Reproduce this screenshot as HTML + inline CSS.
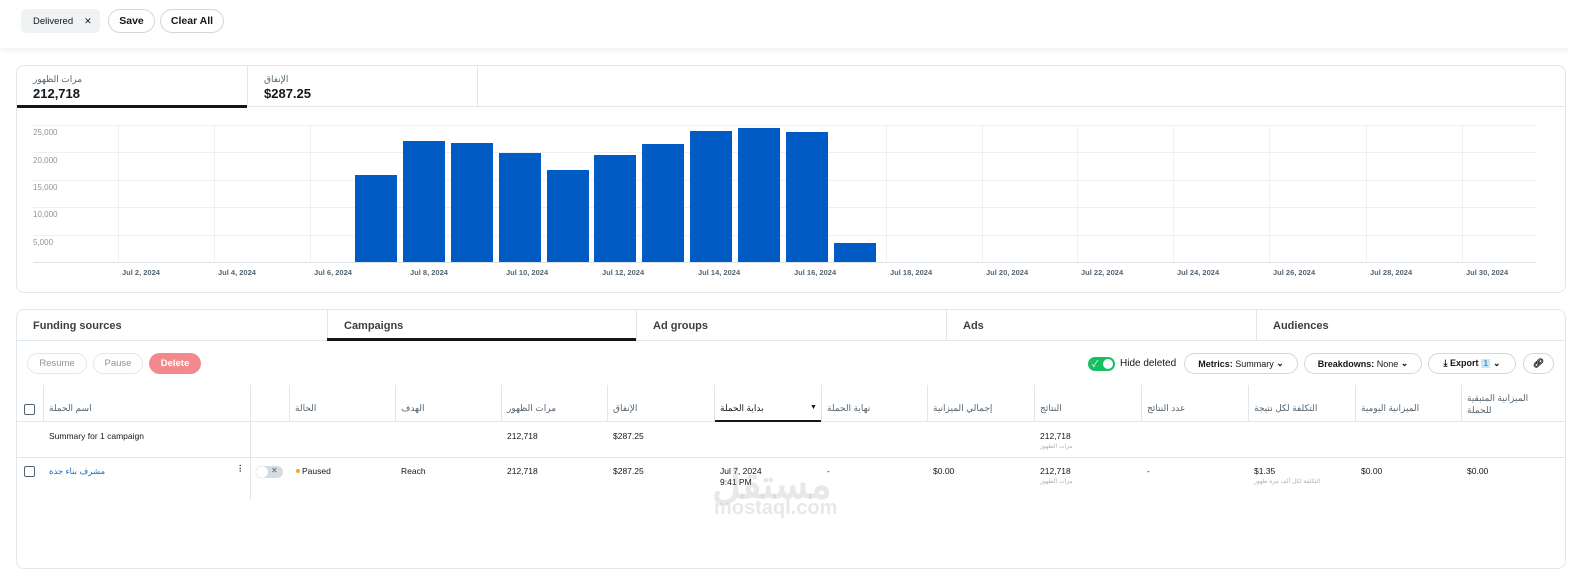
<!DOCTYPE html>
<html><head><meta charset="utf-8"><style>
*{box-sizing:border-box;margin:0;padding:0}
body{width:1569px;height:532px;overflow:hidden;background:#fff;font-family:"Liberation Sans","Noto Sans CJK SC",sans-serif;color:#14171a;position:relative}
.a{position:absolute}
.top{left:0;top:0;width:1569px;height:48px;background:#fff;box-shadow:0 2px 6px rgba(0,0,0,.07)}
.pill{position:absolute;border:1px solid #cfd9de;border-radius:14px;font-size:10.5px;font-weight:bold;display:flex;align-items:center;justify-content:center;background:#fff}
.card{position:absolute;border:1px solid #e1e8ed;border-radius:8px;background:#fff}
.gl{position:absolute;background:#eef1f3}
.yl{position:absolute;left:33px;font-size:8px;color:#8a96a0}
.xl{position:absolute;top:268px;font-size:7.5px;color:#536471;font-weight:bold}
.bar{position:absolute;background:#005bc4;width:42px}
.tab{position:absolute;top:310px;height:30px;font-family:"Liberation Sans Narrow","Liberation Sans",sans-serif;font-weight:bold;font-size:11px;color:#3a3f44;padding:10px 0 0 16px;border-left:1px solid #e1e8ed}
.h{position:absolute;font-size:9px;color:#536471}
.c{position:absolute;font-size:8.5px;color:#14171a}
.s{position:absolute;font-size:6px;color:#aab4bc}
.vl{position:absolute;width:1px;background:#e1e8ed}
.hl{position:absolute;height:1px;background:#e1e8ed;left:17px;width:1549px}
.cb{position:absolute;width:11px;height:11px;border:1.3px solid #536471;border-radius:2px}
</style></head><body>
<div class="a top"></div>
<div class="pill" style="left:21px;top:9px;width:79px;height:24px;background:#eff3f4;border:none;border-radius:5px;font-weight:normal;font-size:9.5px;justify-content:flex-start;padding-left:12px">Delivered<span style="margin-left:11px;font-size:9px">✕</span></div>
<div class="pill" style="left:108px;top:9px;width:47px;height:24px">Save</div>
<div class="pill" style="left:160px;top:9px;width:64px;height:24px">Clear All</div>

<div class="card" style="left:16px;top:65px;width:1550px;height:228px"></div>
<div class="a" style="left:17px;top:106px;width:1548px;height:1px;background:#e1e8ed"></div>
<div class="a" style="left:247px;top:66px;width:1px;height:41px;background:#e1e8ed"></div>
<div class="a" style="left:477px;top:66px;width:1px;height:41px;background:#e1e8ed"></div>
<div class="a" style="left:17px;top:105px;width:230px;height:3px;background:#14171a"></div>
<div class="a" style="left:33px;top:74px;font-size:9px;color:#536471">مرات الظهور</div>
<div class="a" style="left:33px;top:86px;font-size:13px;font-weight:bold">212,718</div>
<div class="a" style="left:264px;top:74px;font-size:9px;color:#536471">الإنفاق</div>
<div class="a" style="left:264px;top:86px;font-size:13px;font-weight:bold">$287.25</div>

<div class="gl" style="left:33px;top:125px;width:1503px;height:1px"></div>
<div class="gl" style="left:33px;top:152px;width:1503px;height:1px"></div>
<div class="gl" style="left:33px;top:180px;width:1503px;height:1px"></div>
<div class="gl" style="left:33px;top:207px;width:1503px;height:1px"></div>
<div class="gl" style="left:33px;top:235px;width:1503px;height:1px"></div>
<div class="gl" style="left:33px;top:262px;width:1503px;height:1px;background:#dde3e8"></div>
<div class="yl" style="top:128px">25,000</div>
<div class="yl" style="top:156px">20,000</div>
<div class="yl" style="top:183px">15,000</div>
<div class="yl" style="top:210px">10,000</div>
<div class="yl" style="top:238px">5,000</div>
<div class="gl" style="left:118px;top:125px;width:1px;height:137px"></div>
<div class="gl" style="left:214px;top:125px;width:1px;height:137px"></div>
<div class="gl" style="left:310px;top:125px;width:1px;height:137px"></div>
<div class="gl" style="left:886px;top:125px;width:1px;height:137px"></div>
<div class="gl" style="left:982px;top:125px;width:1px;height:137px"></div>
<div class="gl" style="left:1077px;top:125px;width:1px;height:137px"></div>
<div class="gl" style="left:1173px;top:125px;width:1px;height:137px"></div>
<div class="gl" style="left:1269px;top:125px;width:1px;height:137px"></div>
<div class="gl" style="left:1366px;top:125px;width:1px;height:137px"></div>
<div class="gl" style="left:1462px;top:125px;width:1px;height:137px"></div>
<div class="bar" style="left:355px;top:175px;height:87px"></div>
<div class="bar" style="left:403px;top:141px;height:121px"></div>
<div class="bar" style="left:451px;top:143px;height:119px"></div>
<div class="bar" style="left:499px;top:153px;height:109px"></div>
<div class="bar" style="left:547px;top:170px;height:92px"></div>
<div class="bar" style="left:594px;top:155px;height:107px"></div>
<div class="bar" style="left:642px;top:144px;height:118px"></div>
<div class="bar" style="left:690px;top:131px;height:131px"></div>
<div class="bar" style="left:738px;top:128px;height:134px"></div>
<div class="bar" style="left:786px;top:132px;height:130px"></div>
<div class="bar" style="left:834px;top:243px;height:19px"></div>
<div class="xl" style="left:122px">Jul 2, 2024</div>
<div class="xl" style="left:218px">Jul 4, 2024</div>
<div class="xl" style="left:314px">Jul 6, 2024</div>
<div class="xl" style="left:410px">Jul 8, 2024</div>
<div class="xl" style="left:506px">Jul 10, 2024</div>
<div class="xl" style="left:602px">Jul 12, 2024</div>
<div class="xl" style="left:698px">Jul 14, 2024</div>
<div class="xl" style="left:794px">Jul 16, 2024</div>
<div class="xl" style="left:890px">Jul 18, 2024</div>
<div class="xl" style="left:986px">Jul 20, 2024</div>
<div class="xl" style="left:1081px">Jul 22, 2024</div>
<div class="xl" style="left:1177px">Jul 24, 2024</div>
<div class="xl" style="left:1273px">Jul 26, 2024</div>
<div class="xl" style="left:1370px">Jul 28, 2024</div>
<div class="xl" style="left:1466px">Jul 30, 2024</div>

<div class="card" style="left:16px;top:309px;width:1550px;height:260px"></div>
<div class="tab" style="left:17px;width:310px;border-left:none">Funding sources</div>
<div class="tab" style="left:327px;width:309px">Campaigns</div>
<div class="tab" style="left:636px;width:310px">Ad groups</div>
<div class="tab" style="left:946px;width:310px">Ads</div>
<div class="tab" style="left:1256px;width:309px">Audiences</div>
<div class="a" style="left:17px;top:340px;width:1548px;height:1px;background:#e1e8ed"></div>
<div class="a" style="left:327px;top:338px;width:309px;height:3px;background:#14171a"></div>

<div class="pill" style="left:27px;top:353px;width:60px;height:21px;font-weight:normal;color:#8a96a0;font-size:9.5px;border-color:#e1e8ed">Resume</div>
<div class="pill" style="left:93px;top:353px;width:50px;height:21px;font-weight:normal;color:#8a96a0;font-size:9.5px;border-color:#e1e8ed">Pause</div>
<div class="pill" style="left:149px;top:353px;width:52px;height:21px;background:#f4898d;border:none;color:#fff;font-size:9.5px">Delete</div>

<div class="a" style="left:1088px;top:357px;width:27px;height:14px;background:#17bf63;border-radius:7px"><span style="position:absolute;left:4px;top:0;color:#fff;font-size:9px">✓</span><div style="position:absolute;right:2px;top:2px;width:10px;height:10px;border-radius:50%;background:#fff"></div></div>
<div class="a" style="left:1120px;top:358px;font-size:10px">Hide deleted</div>
<div class="pill" style="left:1184px;top:353px;width:114px;height:21px;font-size:9px">Metrics:<span style="font-weight:normal">&nbsp;Summary</span>&nbsp;⌄</div>
<div class="pill" style="left:1304px;top:353px;width:118px;height:21px;font-size:9px">Breakdowns:<span style="font-weight:normal">&nbsp;None</span>&nbsp;⌄</div>
<div class="pill" style="left:1428px;top:353px;width:88px;height:21px;font-size:9px">⤓ Export <span style="background:#cde6f7;color:#1d9bf0;padding:0 2px;margin:0 3px;font-size:8px">1</span>⌄</div>
<div class="pill" style="left:1523px;top:353px;width:31px;height:21px;font-size:9px">🔗︎</div>

<div class="hl" style="top:421px"></div>
<div class="hl" style="top:457px"></div>
<div class="vl" style="left:43px;top:385px;height:36px"></div>
<div class="vl" style="left:250px;top:385px;height:115px"></div>
<div class="vl" style="left:289px;top:385px;height:36px"></div>
<div class="vl" style="left:395px;top:385px;height:36px"></div>
<div class="vl" style="left:501px;top:385px;height:36px"></div>
<div class="vl" style="left:607px;top:385px;height:36px"></div>
<div class="vl" style="left:714px;top:385px;height:36px"></div>
<div class="vl" style="left:821px;top:385px;height:36px"></div>
<div class="vl" style="left:927px;top:385px;height:36px"></div>
<div class="vl" style="left:1034px;top:385px;height:36px"></div>
<div class="vl" style="left:1141px;top:385px;height:36px"></div>
<div class="vl" style="left:1248px;top:385px;height:36px"></div>
<div class="vl" style="left:1355px;top:385px;height:36px"></div>
<div class="vl" style="left:1461px;top:385px;height:36px"></div>
<div class="a" style="left:715px;top:420px;width:106px;height:2px;background:#14171a"></div>

<div class="cb" style="left:24px;top:404px"></div>
<div class="h" style="left:49px;top:403px">اسم الحملة</div>
<div class="h" style="left:295px;top:403px">الحالة</div>
<div class="h" style="left:401px;top:403px">الهدف</div>
<div class="h" style="left:507px;top:403px">مرات الظهور</div>
<div class="h" style="left:613px;top:403px">الإنفاق</div>
<div class="h" style="left:720px;top:403px;color:#14171a">بداية الحملة</div>
<div class="a" style="left:810px;top:404px;font-size:7px">▼</div>
<div class="h" style="left:827px;top:403px">نهاية الحملة</div>
<div class="h" style="left:933px;top:403px">إجمالي الميزانية</div>
<div class="h" style="left:1040px;top:403px">النتائج</div>
<div class="h" style="left:1147px;top:403px">عدد النتائج</div>
<div class="h" style="left:1254px;top:403px">التكلفة لكل نتيجة</div>
<div class="h" style="left:1361px;top:403px">الميزانية اليومية</div>
<div class="h" style="left:1467px;top:392px;line-height:12px">الميزانية المتبقية<br>للحملة</div>

<div class="c" style="left:49px;top:431px">Summary for 1 campaign</div>
<div class="c" style="left:507px;top:431px">212,718</div>
<div class="c" style="left:613px;top:431px">$287.25</div>
<div class="c" style="left:1040px;top:431px">212,718</div>
<div class="s" style="left:1040px;top:443px">مرات الظهور</div>

<div class="cb" style="left:24px;top:466px"></div>
<div class="c" style="left:49px;top:466px;color:#1d6fc2">مشرف بناء جدة</div>
<div class="c" style="left:236px;top:463px;font-weight:bold">⋮</div>
<div class="a" style="left:256px;top:466px;width:27px;height:12px;border-radius:6px;background:#d6dde2"><div style="position:absolute;left:0;top:0;width:12px;height:12px;border-radius:50%;background:#fff;box-shadow:0 0 1px #aaa"></div><span style="position:absolute;left:15px;top:0;font-size:8px;color:#536471">✕</span></div>
<div class="a" style="left:296px;top:469px;width:4px;height:4px;border-radius:50%;background:#f5a623"></div>
<div class="c" style="left:302px;top:466px">Paused</div>
<div class="c" style="left:401px;top:466px">Reach</div>
<div class="c" style="left:507px;top:466px">212,718</div>
<div class="c" style="left:613px;top:466px">$287.25</div>
<div class="c" style="left:720px;top:466px;line-height:11px">Jul 7, 2024<br>9:41 PM</div>
<div class="c" style="left:827px;top:466px">-</div>
<div class="c" style="left:933px;top:466px">$0.00</div>
<div class="c" style="left:1040px;top:466px">212,718</div>
<div class="s" style="left:1040px;top:478px">مرات الظهور</div>
<div class="c" style="left:1147px;top:466px">-</div>
<div class="c" style="left:1254px;top:466px">$1.35</div>
<div class="s" style="left:1254px;top:478px">التكلفة لكل ألف مرة ظهور</div>
<div class="c" style="left:1361px;top:466px">$0.00</div>
<div class="c" style="left:1467px;top:466px">$0.00</div>

<div class="a" style="left:712px;top:452px;font-size:40px;font-weight:bold;color:rgba(150,150,150,.22);font-family:'Noto Sans CJK SC',sans-serif">مستقل</div>
<div class="a" style="left:714px;top:497px;font-size:20px;font-weight:bold;color:rgba(150,150,150,.22)">mostaql.com</div>
</body></html>
